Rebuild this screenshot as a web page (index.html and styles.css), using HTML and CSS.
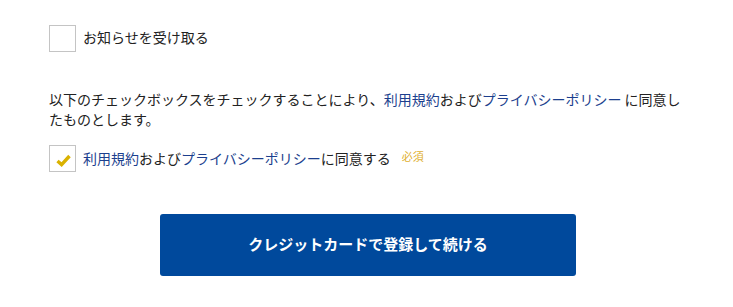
FILE: index.html
```html
<!DOCTYPE html>
<html lang="ja">
<head>
<meta charset="utf-8">
<link rel="stylesheet" href="styles.css">
</head>
<body>
<div class="form">
  <label class="check-row row-news">
    <span class="box"></span>
    <span class="label-text">お知らせを受け取る</span>
  </label>
  <p class="notice">以下のチェックボックスをチェックすることにより、<a href="#">利用規約</a>および<a href="#">プライバシーポリシー</a> に同意したものとします。</p>
  <label class="check-row row-agree">
    <span class="box checked">
      <svg width="15" height="14" viewBox="0 0 15 14"><path d="M1.5 8 L5.6 11.6 L13.5 3" fill="none" stroke="#dab200" stroke-width="3.4" stroke-linejoin="miter"/></svg>
    </span>
    <span class="label-text"><a href="#">利用規約</a>および<a href="#">プライバシーポリシー</a>に同意する</span>
    <span class="required">必須</span>
  </label>
  <div class="actions">
    <button class="submit">クレジットカードで登録して続ける</button>
  </div>
</div>
</body>
</html>
```
FILE: styles.css
```css
html, body {
  margin: 0;
  padding: 0;
  background: #fff;
}
body {
  font-family: "Noto Sans CJK JP", "Noto Sans", sans-serif;
  font-size: 14px;
  color: #222;
}
.form {
  padding: 25px 46px 0 49px;
  width: 638px;
}
.check-row {
  display: flex;
  align-items: center;
  height: 27px;
}
.box {
  box-sizing: border-box;
  width: 27px;
  height: 27px;
  border: 1px solid #c4c4c4;
  background: #fff;
  display: flex;
  align-items: center;
  justify-content: center;
  flex: none;
}
.box svg {
  margin-top: 3px;
  margin-left: 2px;
}
.label-text {
  margin-left: 7px;
  line-height: 20px;
}
.row-news .label-text {
  margin-bottom: 3px;
}
a {
  color: #1c3f8e;
  text-decoration: none;
}
.notice {
  margin: 37px 0 0;
  line-height: 20px;
}
.row-agree {
  margin-top: 16px;
  align-items: flex-start;
}
.row-agree .label-text {
  margin-top: 3px;
}
.required {
  font-size: 11px;
  color: #e0b030;
  margin-left: 11px;
  margin-top: 3px;
  line-height: 16px;
}
.actions {
  display: flex;
  justify-content: center;
  margin-top: 42px;
}
.submit {
  width: 416px;
  height: 62px;
  padding: 0 0 3px;
  border: none;
  border-radius: 3px;
  background: #00499c;
  color: #fff;
  font-family: "Noto Sans CJK JP", "Noto Sans", sans-serif;
  font-size: 15px;
  font-weight: bold;
  cursor: pointer;
}
```
